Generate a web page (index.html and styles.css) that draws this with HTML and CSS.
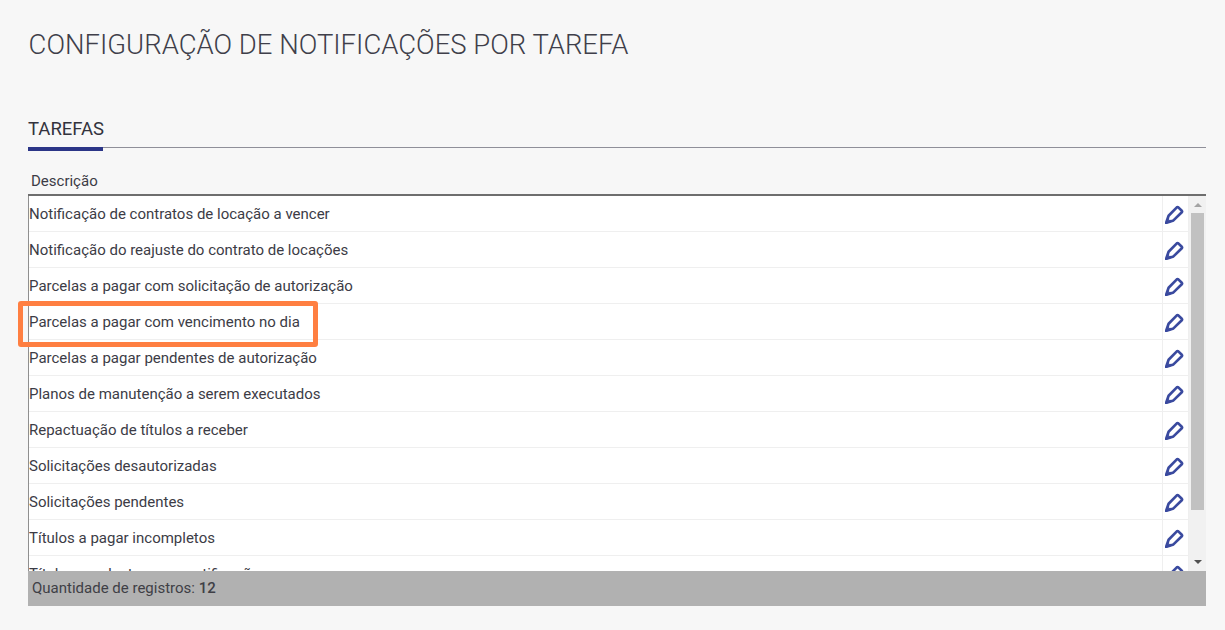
FILE: index.html
```html
<!DOCTYPE html>
<html lang="pt-BR">
<head>
<meta charset="utf-8">
<title>Configuração de notificações por tarefa</title>
<link rel="stylesheet" href="styles.css">
</head>
<body>
<svg class="sprite" width="0" height="0" aria-hidden="true">
  <symbol id="pencil" viewBox="0 0 18 18">
    <path d="M1 17 L3.4 10.2 L11.2 2.2 Q11.9 1.6 12.6 2.2 L15.9 5.5 Q16.5 6.2 15.9 6.9 L8 14.6 Z" fill="none" stroke="#3a4a9f" stroke-width="2.5" stroke-linejoin="round"/>
    <path d="M0.6 17.4 L2.4 11.6 L7 15.8 Z" fill="#3a4a9f"/>
    <path d="M3.5 14.5 L4.1 12.7 L5.4 14 Z" fill="#e4e6f3"/>
  </symbol>
</svg>
<main class="page">
  <h1 class="title">CONFIGURAÇÃO DE NOTIFICAÇÕES POR TAREFA</h1>
  <div class="tabs"><span class="tab">TAREFAS</span></div>
  <div class="col-head">Descrição</div>
  <section class="grid">
    <div class="viewport">
      <ul class="rows">
        <li class="row"><span class="cell">Notificação de contratos de locação a vencer</span><span class="action"><svg class="icon"><use href="#pencil"/></svg></span></li>
        <li class="row"><span class="cell">Notificação do reajuste do contrato de locações</span><span class="action"><svg class="icon"><use href="#pencil"/></svg></span></li>
        <li class="row"><span class="cell">Parcelas a pagar com solicitação de autorização</span><span class="action"><svg class="icon"><use href="#pencil"/></svg></span></li>
        <li class="row"><span class="cell">Parcelas a pagar com vencimento no dia</span><span class="action"><svg class="icon"><use href="#pencil"/></svg></span></li>
        <li class="row"><span class="cell">Parcelas a pagar pendentes de autorização</span><span class="action"><svg class="icon"><use href="#pencil"/></svg></span></li>
        <li class="row"><span class="cell">Planos de manutenção a serem executados</span><span class="action"><svg class="icon"><use href="#pencil"/></svg></span></li>
        <li class="row"><span class="cell">Repactuação de títulos a receber</span><span class="action"><svg class="icon"><use href="#pencil"/></svg></span></li>
        <li class="row"><span class="cell">Solicitações desautorizadas</span><span class="action"><svg class="icon"><use href="#pencil"/></svg></span></li>
        <li class="row"><span class="cell">Solicitações pendentes</span><span class="action"><svg class="icon"><use href="#pencil"/></svg></span></li>
        <li class="row"><span class="cell">Títulos a pagar incompletos</span><span class="action"><svg class="icon"><use href="#pencil"/></svg></span></li>
        <li class="row"><span class="cell">Títulos pendentes com notificações</span><span class="action"><svg class="icon"><use href="#pencil"/></svg></span></li>
      </ul>
      <div class="scrollbar">
        <span class="arrow arrow-up"></span>
        <span class="thumb"></span>
        <span class="arrow arrow-down"></span>
      </div>
    </div>
    <footer class="summary">Quantidade de registros: <b class="count">12</b></footer>
  </section>
  <div class="highlight"></div>
</main>
</body>
</html>
```

FILE: styles.css
```css
* { box-sizing: border-box; }
html, body { margin: 0; height: 630px; overflow: hidden; }
body { background: #f7f7f7; font-family: Roboto, "Liberation Sans", sans-serif; color: #3c3c46; }
.sprite { position: absolute; }
.page { position: relative; padding: 0 19px 0 28px; }
.title { margin: 0; padding: 27px 0 0 0.6px; height: 118px; font-size: 27.47px; line-height: 36px; font-weight: 300; color: #3f3f4a; }
.tabs { height: 30px; border-bottom: 1px solid #8f8f99; display: flex; align-items: flex-start; }
.tab { flex: none; width: 75px; height: 33px; padding-top: 1px; border-bottom: 4px solid #2b3587; font-size: 18.5px; line-height: 21px; font-weight: 400; color: #33333d; white-space: nowrap; }
.col-head { height: 46px; padding: 24px 0 0 3px; font-size: 15px; line-height: 18px; }
.grid { border-top: 2px solid #6e6e6e; }
.viewport { height: 375px; display: flex; overflow: hidden; border-left: 1px solid #8f8f8f; }
.rows { flex: 1; margin: 0; padding: 0; list-style: none; background: #fff; }
.row { height: 36px; display: flex; border-bottom: 1px solid #efefef; }
.cell { flex: 1; padding: 9px 0 0 0; font-size: 15px; line-height: 19px; }
.action { width: 27px; padding: 1px 3px 0 0; display: flex; align-items: center; justify-content: center; border-left: 1px solid #efefef; border-right: 1px solid #efefef; }
.icon { flex: none; width: 19px; height: 19px; }
.scrollbar { width: 17px; background: #f1f1f1; display: flex; flex-direction: column; align-items: center; }
.arrow { flex: none; width: 0; height: 0; border-left: 4px solid transparent; border-right: 4px solid transparent; }
.arrow-up { margin: 7px 0 6px; border-bottom: 4px solid #a3a3a3; }
.arrow-down { margin: auto 0 7px; border-top: 4px solid #505050; }
.thumb { flex: none; width: 13px; height: 297px; background: #c1c1c1; }
.summary { height: 35px; padding: 7px 0 0 4px; background: #b1b1b1; font-size: 15px; line-height: 20px; color: #3f3f46; }
.count { font-weight: 500; }
.highlight { position: absolute; left: 18px; top: 301px; width: 300px; height: 46px; border: 5px solid #ff7f41; border-radius: 3px; }
```
